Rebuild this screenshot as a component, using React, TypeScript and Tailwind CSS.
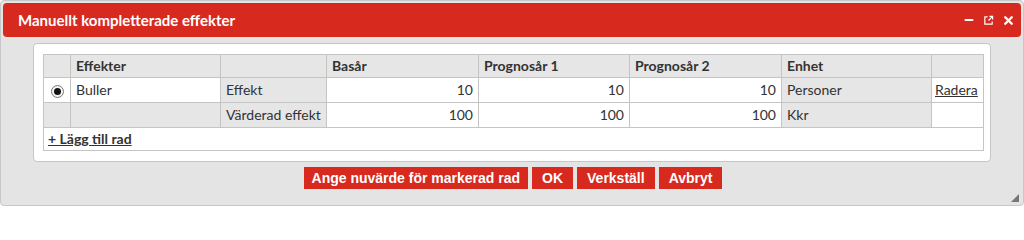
import { Minus, X } from "lucide-react";

const ROWS = [
  { radio: true, name: "Buller", label: "Effekt", bas: "10", p1: "10", p2: "10", unit: "Personer", del: true },
  { radio: false, name: "", label: "Värderad effekt", bas: "100", p1: "100", p2: "100", unit: "Kkr", del: false },
];

const COLS = [27, 150, 106, 152, 151, 152, 150, 52];

const cell = "border border-[#c4c4c4] px-[5px] leading-[22px] whitespace-nowrap";

export default function App() {
  return (
    <div className="h-[206px] w-[1024px] overflow-hidden bg-white font-['Lato','Open_Sans',sans-serif] text-[14px] text-[#333]">
      <div className="flex h-[206px] flex-col rounded-[4px] border border-[#c8c8c8] bg-[#e4e4e4] p-[2px]">
        <div className="flex h-[34px] shrink-0 items-center justify-between rounded-[4px] bg-[#d8291f] pl-[15px] pr-[6px]">
          <span className="text-[15px] font-bold text-white">Manuellt kompletterade effekter</span>
          <div className="flex items-center gap-[8px] text-white">
            <Minus className="h-[12px] w-[12px]" strokeWidth={4} />
            <svg viewBox="0 0 12 12" className="h-[11px] w-[11px]" fill="none" stroke="white" strokeWidth="1.3">
              <path d="M5 2H2v8h8V7" />
              <path d="M6 6l4.5-4.5M7 1.5h3.5V5" />
            </svg>
            <X className="h-[13px] w-[13px]" strokeWidth={4.5} />
          </div>
        </div>
        <div className="mx-[30px] mt-[6px] shrink-0 rounded-[4px] border border-[#c6c6c6] bg-white px-[9px] pb-[10px] pt-[10px]">
          <table className="w-[940px] table-fixed border-collapse">
            <colgroup>
              {COLS.map((w, i) => (
                <col key={i} style={{ width: w }} />
              ))}
            </colgroup>
            <thead>
              <tr className="h-[23px] bg-[#e6e6e6] font-bold">
                <th className={cell} />
                <th className={`${cell} text-left`}>Effekter</th>
                <th className={cell} />
                <th className={`${cell} text-left`}>Basår</th>
                <th className={`${cell} text-left`}>Prognosår 1</th>
                <th className={`${cell} text-left`}>Prognosår 2</th>
                <th className={`${cell} text-left`}>Enhet</th>
                <th className={cell} />
              </tr>
            </thead>
            <tbody>
              {ROWS.map((r, i) => (
                <tr key={i} className="h-[25px]">
                  <td className={`${cell} ${r.radio ? "" : "bg-[#e6e6e6]"} text-center`}>
                    {r.radio && (
                      <span className="inline-grid h-[13px] w-[13px] place-items-center rounded-full border border-[#777] bg-[#f4f4f4] align-middle">
                        <span className="h-[7px] w-[7px] rounded-full bg-[#111]" />
                      </span>
                    )}
                  </td>
                  <td className={`${cell} ${r.radio ? "" : "bg-[#e6e6e6]"}`}>{r.name}</td>
                  <td className={`${cell} bg-[#e6e6e6]`}>{r.label}</td>
                  <td className={`${cell} text-right`}>{r.bas}</td>
                  <td className={`${cell} text-right`}>{r.p1}</td>
                  <td className={`${cell} text-right`}>{r.p2}</td>
                  <td className={`${cell} bg-[#e6e6e6]`}>{r.unit}</td>
                  <td className={`${cell} pl-[3px] text-left`}>
                    {r.del && <a className="underline">Radera</a>}
                  </td>
                </tr>
              ))}
              <tr className="h-[23px]">
                <td colSpan={8} className="border border-[#c4c4c4] px-[4px] leading-[22px]">
                  <a className="font-bold underline">+ Lägg till rad</a>
                </td>
              </tr>
            </tbody>
          </table>
        </div>
        <div className="mt-[5px] flex justify-center gap-[4px] pl-[2px] font-['Liberation_Sans',Arial,sans-serif] text-[14px] font-bold text-white">
          <button className="h-[22px] bg-[#d8291f] px-[8px]">Ange nuvärde för markerad rad</button>
          <button className="h-[22px] bg-[#d8291f] px-[10px]">OK</button>
          <button className="h-[22px] bg-[#d8291f] px-[10px]">Verkställ</button>
          <button className="h-[22px] bg-[#d8291f] px-[10px]">Avbryt</button>
        </div>
        <div className="mt-auto flex justify-end pb-[1px] pr-[2px]">
          <svg viewBox="0 0 8 8" className="h-[8px] w-[8px]">
            <path d="M8 0V8H0Z" fill="#777" />
          </svg>
        </div>
      </div>
    </div>
  );
}
